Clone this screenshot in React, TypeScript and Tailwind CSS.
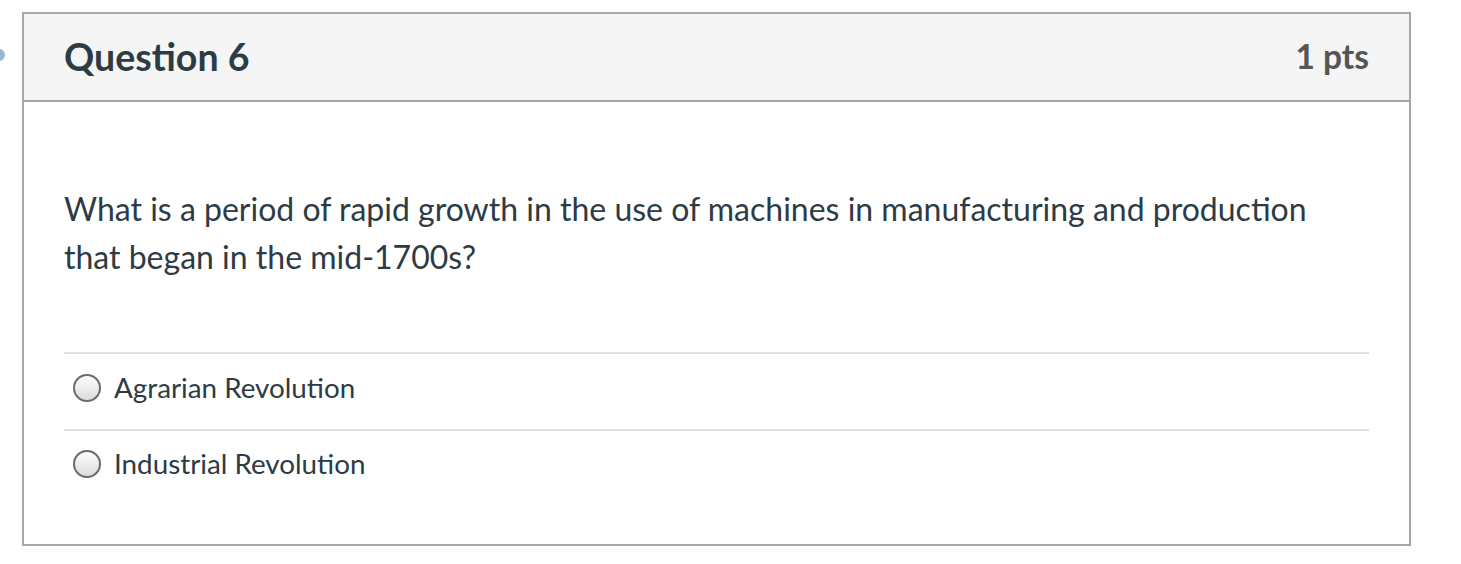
export default function App() {
  const answers = ['Agrarian Revolution', 'Industrial Revolution']

  return (
    <div className="relative min-h-screen bg-white pt-[12px] pl-[22px] font-['Lato','Noto_Sans',sans-serif] text-[#2d3b45]">
      <div className="absolute left-[-7px] top-[49px] h-[12px] w-[12px] rounded-full bg-[#7ea6c9] opacity-80"></div>
      <div className="w-[1389px] border-2 border-[#a7a7a7]">
        <div className="flex h-[88px] items-center justify-between border-b-2 border-[#a7a7a7] bg-[#f5f5f5] px-[40px]">
          <h2 className="text-[37.5px] font-bold leading-none">Question 6</h2>
          <span className="text-[33.5px] font-bold leading-none text-[#555555]">1 pts</span>
        </div>
        <div className="px-[40px] pt-[83px] pb-[40px]">
          <p className="text-[32px] leading-[48px]">
            What is a period of rapid growth in the use of machines in manufacturing and production
            <br />
            that began in the mid-1700s?
          </p>
          <div className="mt-[71px]">
            {answers.map((a, i) => (
              <label
                key={a}
                className={`flex items-center gap-[13px] border-t-2 border-[#e0e0e0] pb-[7px] pl-[9px] ${i === answers.length - 1 ? 'h-[75px]' : 'h-[77px]'}`}
              >
                <span className="h-[28px] w-[28px] rounded-full border-2 border-[#6b6b6b] bg-gradient-to-b from-[#fdfdfd] to-[#dcdcdc]"></span>
                <span className="text-[27.8px] leading-none">{a}</span>
              </label>
            ))}
          </div>
        </div>
      </div>
    </div>
  )
}
